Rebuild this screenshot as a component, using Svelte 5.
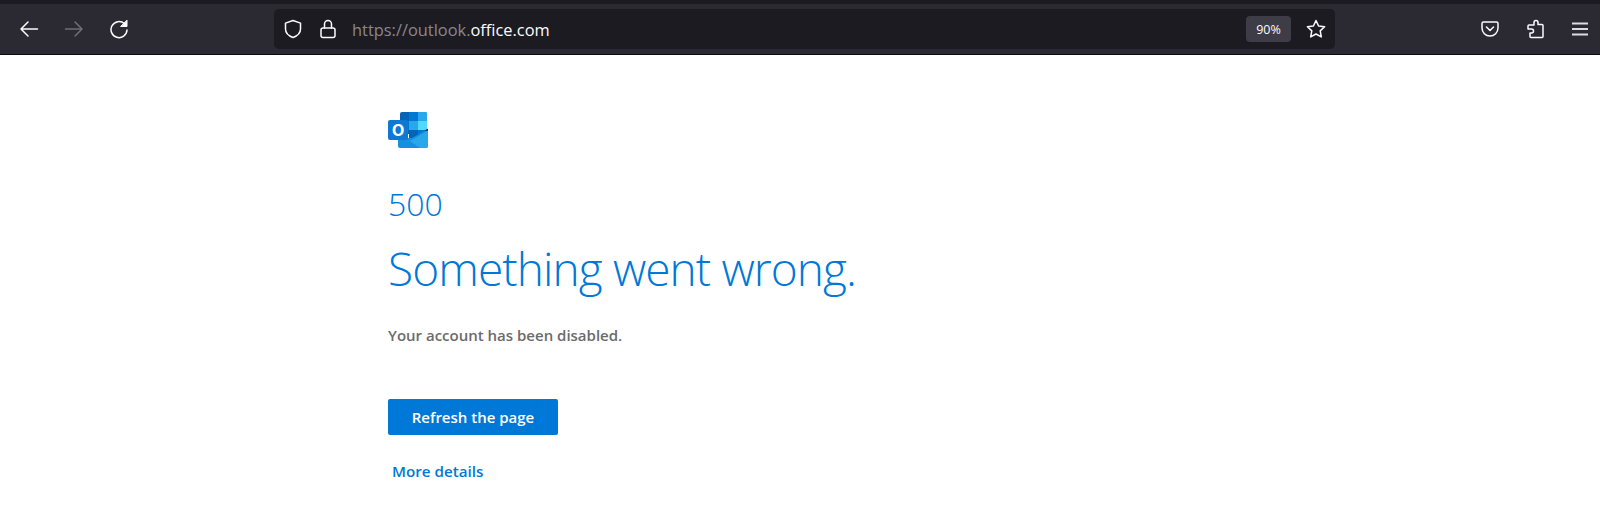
<script lang="ts">
    const message = "Your account has been disabled."
</script>

<header class="toolbar">
    <nav class="nav">
        <button class="tool" aria-label="Back">
            <svg viewBox="0 0 20 20"><path d="M18.500 10H2M9 3l-7 7 7 7" /></svg>
        </button>
        <button class="tool dim" aria-label="Forward">
            <svg viewBox="0 0 20 20"><path d="M1.500 10H18M11 3l7 7-7 7" /></svg>
        </button>
        <button class="tool" aria-label="Reload">
            <svg viewBox="0 0 20 20">
                <path d="M15.500 4.800A8 8 0 1 0 18 11" />
                <path class="solid" d="M18 1.500v6h-6z" />
            </svg>
        </button>
    </nav>
    <div class="urlbar">
        <svg class="ic shield" viewBox="0 0 20 20"><path d="M10 1.500l7.500 2.600v6c0 4-3.400 7-7.500 8.400-4.100-1.400-7.500-4.400-7.500-8.400v-6z" /></svg>
        <svg class="ic lock" viewBox="0 0 20 20"><rect x="3" y="9" width="14" height="9.500" rx="2" /><path d="M6.500 9V5a3.500 3.500 0 0 1 7 0v4" /></svg>
        <span class="url">https://outlook.<b>office.com</b></span>
        <span class="zoom">90%</span>
        <svg class="ic star" viewBox="0 0 20 20"><path d="M10 1.500l2.600 5.500 6 .8-4.400 4.100 1.100 6-5.300-2.900-5.300 2.900 1.100-6L1.400 7.800l6-.8z" /></svg>
    </div>
    <div class="extras">
        <svg class="ic" viewBox="0 0 20 20"><path d="M3.500 3h13A1.500 1.500 0 0 1 18 4.500V9a8 8 0 0 1-16 0V4.500A1.500 1.500 0 0 1 3.500 3zM6.500 8l3.500 3.500L13.500 8" /></svg>
        <svg class="ic" viewBox="0 0 20 20"><path d="M11 1.500a2 2 0 0 1 2 2V5.500h4a1 1 0 0 1 1 1v11a1 1 0 0 1-1 1H6a1 1 0 0 1-1-1v-3.500h1.500a2 2 0 0 0 0-4H3V7a1 1 0 0 1 1-1h5V3.500a2 2 0 0 1 2-2z" /></svg>
        <svg class="ic menu" viewBox="0 0 20 20"><path d="M2 4.500h16M2 10h16M2 15.500h16" /></svg>
    </div>
</header>

<main class="page">
    <svg class="logo" viewBox="0 0 42 38" aria-label="Outlook">
        <path d="M12 4a2 2 0 0 1 2-2h23a2 2 0 0 1 2 2v20H12z" fill="#0364b8" />
        <rect x="21" y="2" width="9" height="9" fill="#0078d4" />
        <path d="M30 2h7a2 2 0 0 1 2 2v7h-9z" fill="#28a8ea" />
        <rect x="12" y="11" width="9" height="9" fill="#0078d4" />
        <rect x="21" y="11" width="9" height="9" fill="#28a8ea" />
        <rect x="30" y="11" width="9" height="9" fill="#50d9ff" />
        <rect x="21" y="20" width="9" height="9" fill="#0364b8" />
        <rect x="30" y="20" width="9" height="9" fill="#0078d4" />
        <path d="M10 28h14l16-9v17a2 2 0 0 1-2 2H12a2 2 0 0 1-2-2z" fill="#1490df" />
        <path d="M40 18.500l-3.500 2 3.500 1z" fill="#0a2767" />
        <path d="M40 20.500 22 31l10 7h6a2 2 0 0 0 2-2z" fill="#28a8ea" />
        <rect x="0" y="10" width="20" height="20" rx="2" fill="#0f78d4" />
        <text x="10" y="26" class="logo-o">O</text>
    </svg>

    <p class="code">500</p>
    <h1>Something went wrong.</h1>
    <p class="message">{message}</p>

    <button class="refresh">Refresh the page</button>
    <a class="details" href="#details">More details</a>
</main>

<style>
    :global(body) {
        background: #fff;
        font-family: "Open Sans", sans-serif;
    }

    .toolbar {
        height: 50px;
        padding-top: 4px;
        background: linear-gradient(#1c1b22 0 4px, #2b2a33 4px);
        display: flex;
        align-items: center;
        border-bottom: 1px solid #0c0c0d;
    }

    .nav {
        display: flex;
        width: 274px;
        padding-left: 7px;
        gap: 1px;
        box-sizing: border-box;
    }

    .tool {
        width: 44px;
        height: 40px;
        padding: 0;
        border: 0;
        background: none;
        display: flex;
        align-items: center;
        justify-content: center;
    }

    .tool svg,
    .ic {
        width: 20px;
        height: 20px;
        fill: none;
        stroke: #fbfbfe;
        stroke-width: 1.500;
        stroke-linejoin: round;
        stroke-linecap: round;
    }

    .tool .solid {
        fill: #fbfbfe;
        stroke-width: 1;
    }

    .tool.dim svg {
        stroke: #6f6e75;
    }

    .urlbar {
        width: 1061px;
        height: 40px;
        background: #1c1b22;
        border-radius: 5px;
        display: flex;
        align-items: center;
        padding: 0 9px 0 9px;
        box-sizing: border-box;
    }

    .shield {
        margin-right: 15px;
    }

    .lock {
        margin-right: 14px;
    }

    .url {
        flex: 1;
        color: #88888d;
        font-size: 16.400px;
    }

    .url b {
        color: #fbfbfe;
        font-weight: 400;
    }

    .zoom {
        width: 45px;
        height: 26px;
        margin-right: 15px;
        background: #3d3c47;
        border-radius: 4px;
        color: #fbfbfe;
        font-size: 12.500px;
        display: flex;
        align-items: center;
        justify-content: center;
    }

    .extras {
        flex: 1;
        display: flex;
        align-items: center;
        justify-content: flex-end;
        gap: 25px;
        padding-right: 10px;
    }

    .menu {
        stroke: #dcdce0;
        stroke-width: 2;
        stroke-linecap: butt;
    }

    .page {
        padding: 55px 0 0 388px;
        display: flex;
        flex-direction: column;
        align-items: flex-start;
    }

    .logo {
        width: 42px;
        height: 38px;
    }

    .logo-o {
        font-size: 16px;
        font-weight: 700;
        fill: #fff;
        text-anchor: middle;
    }

    .code {
        margin: 34px 0 0;
        font-size: 32px;
        line-height: 44px;
        font-weight: 300;
        color: #0078d7;
    }

    h1 {
        margin: 10px 0 0;
        font-size: 46px;
        line-height: 64px;
        font-weight: 300;
        letter-spacing: -0.900px;
        color: #0078d7;
    }

    .message {
        margin: 25px 0 0;
        font-size: 15px;
        line-height: 20px;
        font-weight: 600;
        color: #6b6b6b;
    }

    .refresh {
        margin-top: 54px;
        width: 170px;
        height: 36px;
        border: 0;
        border-radius: 2px;
        background: #0078d7;
        color: #fff;
        font-family: inherit;
        font-size: 15px;
        font-weight: 600;
    }

    .details {
        margin: 26px 0 0 4px;
        color: #0078d7;
        font-size: 15.200px;
        line-height: 20px;
        font-weight: 600;
        text-decoration: none;
    }
</style>
